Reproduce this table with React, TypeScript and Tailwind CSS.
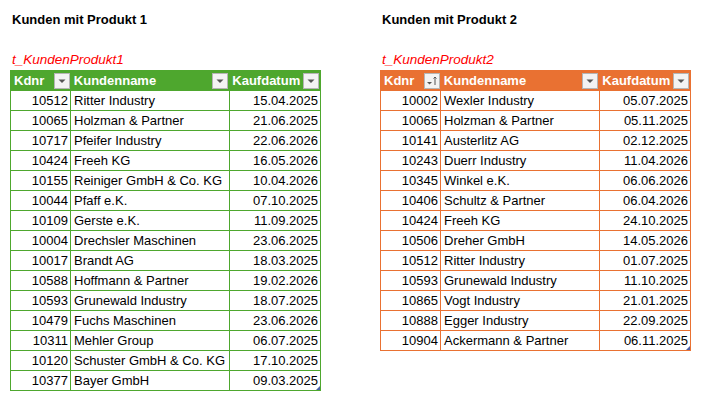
import React from "react";

type Row = [string, string, string];

const produkt1: Row[] = [
  ["10512", "Ritter Industry", "15.04.2025"],
  ["10065", "Holzman & Partner", "21.06.2025"],
  ["10717", "Pfeifer Industry", "22.06.2026"],
  ["10424", "Freeh KG", "16.05.2026"],
  ["10155", "Reiniger GmbH & Co. KG", "10.04.2026"],
  ["10044", "Pfaff e.K.", "07.10.2025"],
  ["10109", "Gerste e.K.", "11.09.2025"],
  ["10004", "Drechsler Maschinen", "23.06.2025"],
  ["10017", "Brandt AG", "18.03.2025"],
  ["10588", "Hoffmann & Partner", "19.02.2026"],
  ["10593", "Grunewald Industry", "18.07.2025"],
  ["10479", "Fuchs Maschinen", "23.06.2026"],
  ["10311", "Mehler Group", "06.07.2025"],
  ["10120", "Schuster GmbH & Co. KG", "17.10.2025"],
  ["10377", "Bayer GmbH", "09.03.2025"],
];

const produkt2: Row[] = [
  ["10002", "Wexler Industry", "05.07.2025"],
  ["10065", "Holzman & Partner", "05.11.2025"],
  ["10141", "Austerlitz AG", "02.12.2025"],
  ["10243", "Duerr Industry", "11.04.2026"],
  ["10345", "Winkel e.K.", "06.06.2026"],
  ["10406", "Schultz & Partner", "06.04.2026"],
  ["10424", "Freeh KG", "24.10.2025"],
  ["10506", "Dreher GmbH", "14.05.2026"],
  ["10512", "Ritter Industry", "01.07.2025"],
  ["10593", "Grunewald Industry", "11.10.2025"],
  ["10865", "Vogt Industry", "21.01.2025"],
  ["10888", "Egger Industry", "22.09.2025"],
  ["10904", "Ackermann & Partner", "06.11.2025"],
];

function FilterButton({ sorted }: { sorted?: boolean }) {
  return (
    <span className="w-4 h-4 bg-[#f3f3f3] border border-[#b5b5b5] flex items-center justify-center shrink-0">
      {sorted ? (
        <svg width="12" height="12" viewBox="0 0 12 12">
          <path d="M1 7h5l-2.5 2.5z" fill="#555" />
          <path d="M9 2v8M7.5 3.5 9 2l1.5 1.5" stroke="#555" strokeWidth="1" fill="none" />
        </svg>
      ) : (
        <svg width="10" height="10" viewBox="0 0 10 10">
          <path d="M1.5 3.5h7L5 7z" fill="#555" />
        </svg>
      )}
    </span>
  );
}

function Tabelle({
  name,
  rows,
  color,
  sortedFirst,
}: {
  name: string;
  rows: Row[];
  color: "green" | "orange";
  sortedFirst?: boolean;
}) {
  const head = color === "green" ? "bg-[#4ea72e]" : "bg-[#e97132]";
  const line = color === "green" ? "border-[#4ea72e]" : "border-[#e97132]";
  const headers = ["Kdnr", "Kundenname", "Kaufdatum"];
  const widths = ["w-[60px]", "w-[159px]", "w-[91px]"];

  return (
    <div className="flex flex-col">
      <div className="text-[#ff0000] italic text-[13.5px] leading-[20px] pl-[2px]">{name}</div>
      <div className={`relative border ${line} w-[311px]`}>
        <div className={`flex ${head} h-[19px]`}>
          {headers.map((h, i) => (
            <div
              key={h}
              className={`${widths[i]} flex items-center justify-between pl-[3px] pr-[1px] text-white font-bold text-[13px]`}
            >
              <span>{h}</span>
              <FilterButton sorted={sortedFirst && i === 0} />
            </div>
          ))}
        </div>
        {rows.map((r) => (
          <div key={r[0] + r[1]} className={`flex h-[20px] border-t ${line} text-[13px] text-black`}>
            <div className={`w-[60px] border-r ${line} text-right pr-[2px] leading-[19px]`}>{r[0]}</div>
            <div className={`w-[159px] border-r ${line} pl-[3px] leading-[19px] whitespace-nowrap`}>{r[1]}</div>
            <div className="flex-1 text-right pr-[2px] leading-[19px]">{r[2]}</div>
          </div>
        ))}
        <span className="absolute right-0 bottom-0 w-0 h-0 border-l-[4px] border-l-transparent border-b-[4px] border-b-[#4a5fa8]" />
      </div>
    </div>
  );
}

export default function App() {
  return (
    <div className="w-[711px] h-[402px] bg-white font-['Liberation_Sans',Arial,sans-serif] flex pl-[10px] pt-[10px] gap-[59px]">
      <div className="flex flex-col">
        <div className="font-bold text-[13px] leading-[20px] pl-[2px] mb-[20px]">Kunden mit Produkt 1</div>
        <Tabelle name="t_KundenProdukt1" rows={produkt1} color="green" />
      </div>
      <div className="flex flex-col">
        <div className="font-bold text-[13px] leading-[20px] pl-[2px] mb-[20px]">Kunden mit Produkt 2</div>
        <Tabelle name="t_KundenProdukt2" rows={produkt2} color="orange" sortedFirst />
      </div>
    </div>
  );
}
